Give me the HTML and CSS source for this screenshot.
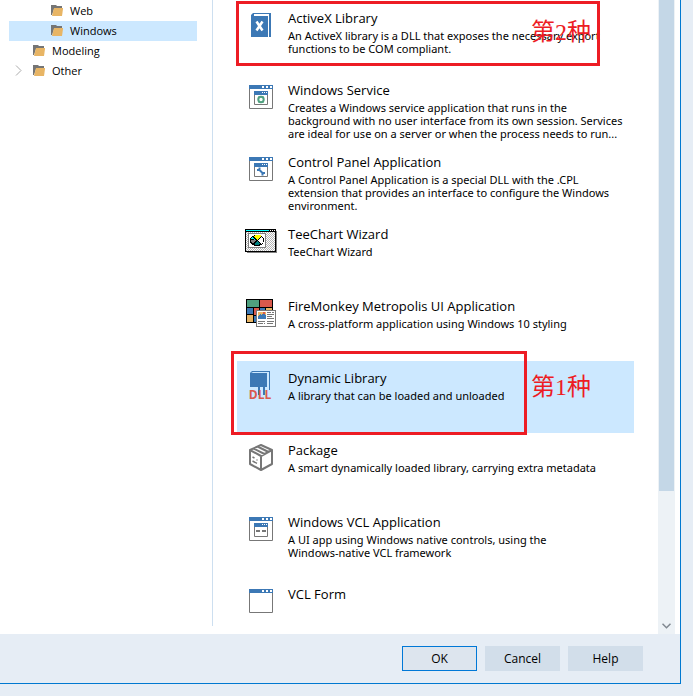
FILE: index.html
```html
<!DOCTYPE html>
<html lang="en">
<head>
  <meta charset="UTF-8">
  <meta name="viewport" content="width=device-width, initial-scale=1.0">
  <title>New Items</title>
  <link rel="stylesheet" href="styles.css">
</head>
<body>
  <!-- shared icon parts -->
  <svg class="defs" width="0" height="0">
    <defs>
      <g id="folder">
        <path fill="#757575" d="M0 0h5l1 1h5v3H3L1 10H0z"/>
        <path fill="#e8b565" d="M3 3h9v1l-1 7H1z"/>
      </g>
      <g id="window">
        <path fill="#fff" stroke="#777" d="M4.500 4.500h23v23h-23z"/>
        <path fill="#3c78b5" d="M4 4h24v4H4z"/>
        <path fill="#fff" d="M17 5h2v2h-2zM21 5h2v2h-2zM25 5h2v2h-2z"/>
      </g>
      <g id="inner">
        <path fill="#fff" stroke="#777" d="M9.500 10.500h13v13h-13z"/>
        <path fill="#3c78b5" d="M9 10h14v4H9z"/>
        <path fill="#fff" d="M17 11h1v1h-1zM19 11h1v1h-1zM21 11h1v1h-1z"/>
      </g>
      <pattern id="dots" width="2" height="2" patternUnits="userSpaceOnUse">
        <path fill="#fff" d="M0 0h2v2H0z"/>
        <path fill="#b4b4b4" d="M0 0h1v1H0zM1 1h1v1H1z"/>
      </pattern>
    </defs>
  </svg>

  <div class="dialog">
    <main class="content">
      <nav class="tree">
        <ul>
          <li class="node level-2"><svg class="folder" viewBox="0 0 12 11"><use href="#folder"/></svg>Web</li>
          <li class="node level-2 selected"><svg class="folder" viewBox="0 0 12 11"><use href="#folder"/></svg>Windows</li>
          <li class="node"><svg class="folder" viewBox="0 0 12 11"><use href="#folder"/></svg>Modeling</li>
          <li class="node">
            <svg class="expand" viewBox="0 0 7 11"><path fill="none" stroke="#aaa" d="M1 .5l5 5-5 5"/></svg>
            <svg class="folder" viewBox="0 0 12 11"><use href="#folder"/></svg>Other
          </li>
        </ul>
      </nav>

      <ul class="gallery">
        <li class="item">
          <svg class="icon" viewBox="0 0 32 32">
            <path fill="#3c78b5" d="M8 4h18v24h-2V6H9v1h14v21H6V6z"/>
            <path fill="#fff" d="M9 5h15v1H9z"/>
            <path fill="none" stroke="#fff" stroke-width="2.500" d="M11.500 12.500l6 9M17.500 12.500l-6 9"/>
          </svg>
          <div class="info">
            <h2>ActiveX Library</h2>
            <p>An ActiveX library is a DLL that exposes the necessary export functions to be COM compliant.</p>
          </div>
          <div class="mark mark-second"></div>
          <span class="note note-second" lang="zh-CN">第2种</span>
        </li>
        <li class="item">
          <svg class="icon" viewBox="0 0 32 32">
            <use href="#window"/><use href="#inner"/>
            <circle cx="16" cy="18.500" r="2.700" fill="none" stroke="#4fa07f" stroke-width="2"/>
            <path fill="#4fa07f" d="M13 15.500h1.500V17H13zM17.500 15.500H19V17h-1.500zM13 20h1.500v1.500H13zM17.500 20H19v1.500h-1.500z"/>
          </svg>
          <div class="info">
            <h2>Windows Service</h2>
            <p>Creates a Windows service application that runs in the background with no user interface from its own session. Services are ideal for use on a server or when the process needs to run...</p>
          </div>
        </li>
        <li class="item">
          <svg class="icon" viewBox="0 0 32 32">
            <use href="#window"/><use href="#inner"/>
            <path fill="none" stroke="#3c78b5" stroke-width="2" d="M14 16.500l4.500 4.500M12 17h2.500v-2.500M17.500 22.500V20H20"/>
          </svg>
          <div class="info">
            <h2>Control Panel Application</h2>
            <p>A Control Panel Application is a special DLL with the .CPL extension that provides an interface to configure the Windows environment.</p>
          </div>
        </li>
        <li class="item">
          <svg class="icon" viewBox="0 0 32 32" shape-rendering="crispEdges">
            <path fill="#808080" d="M2 6h30v22H2z"/>
            <path d="M0 4h31v23H0z"/>
            <path fill="#0ff" d="M1 5h23v1H1z"/>
            <path fill="#fff" d="M25 5h1v1h-1zM27 5h1v1h-1zM29 5h1v1h-1z"/>
            <path fill="url(#dots)" d="M1 7h29v19H1z"/>
            <path fill="#fff" stroke="#808080" d="M3.500 8.500h17v14h-17z"/>
            <ellipse cx="12" cy="15.500" rx="7" ry="5.500"/>
            <path fill="#ff0" d="M12 15l-4-4 3-1h3l3 1z"/>
            <path fill="#0ff" d="M11 15l-5-1 1-2z"/>
            <path fill="#808080" d="M6 15h5l-3 4-2-2z"/>
            <path fill="#008080" d="M12 16l3 3-2 1h-3l-1-1z"/>
            <path fill="#fff" d="M13 15l3-3 2 2v3l-2 2z"/>
          </svg>
          <div class="info">
            <h2>TeeChart Wizard</h2>
            <p>TeeChart Wizard</p>
          </div>
        </li>
        <li class="item">
          <svg class="icon" viewBox="0 0 32 32" shape-rendering="crispEdges">
            <path d="M1 2h27v24H1z"/>
            <path fill="#4fa07f" d="M2 3h12v7H2z"/>
            <path fill="#d9594c" d="M15 3h12v7H15zM9 11h5v7H9z"/>
            <path fill="#3c78b5" d="M2 11h6v6H2zM9 19h5v6H9zM15 11h5v7h-5z"/>
            <path fill="#e8b565" d="M2 18h6v7H2zM21 11h6v7h-6z"/>
            <path fill="#fff" stroke="#777" d="M11.500 13.500h19v16h-19z"/>
            <path fill="#e8b565" d="M13 15h8v7h-8z"/>
            <path fill="#3c78b5" d="M13 22v-3l2-2 2 1 1-2 3 3v3z"/>
            <path fill="#d9594c" d="M18 15h2v2h-2z"/>
            <path fill="#777" d="M22 15h4v1h-4zM27 15h2v1h-2zM22 17h7v1h-7zM22 19h5v1h-5zM22 21h7v1h-7zM13 24h7v1h-7zM13 26h5v1h-5zM19 26h1v1h-1zM22 24h7v1h-7zM22 26h6v1h-6z"/>
          </svg>
          <div class="info">
            <h2>FireMonkey Metropolis UI Application</h2>
            <p>A cross-platform application using Windows 10 styling</p>
          </div>
        </li>
        <li class="item selected">
          <svg class="icon" viewBox="0 0 32 32">
            <path fill="#3c78b5" d="M7 2h18v19h-1V3H8L6 4h16v14H5V4z"/>
            <path fill="#3c78b5" d="M13 18h2v8h-2zM18 18h2v8h-2z"/>
            <text class="dll-mark" x="15" y="30" text-anchor="middle">DLL</text>
          </svg>
          <div class="info">
            <h2>Dynamic Library</h2>
            <p>A library that can be loaded and unloaded</p>
          </div>
          <div class="mark mark-first"></div>
          <span class="note note-first" lang="zh-CN">第1种</span>
        </li>
        <li class="item">
          <svg class="icon" viewBox="0 0 32 32">
            <path fill="none" stroke="#777" stroke-width="2" stroke-linejoin="round" d="M16 4l11 5v14l-11 6-11-6V9zM5 9l11 6 11-6M16 15v14M8.500 7.500l11 5.500M12.500 5.500l11 5.500"/>
            <path fill="none" stroke="#777" stroke-width="1.500" d="M7.500 16l2 1M7.500 20l4.500 2.300M12 18.500v1"/>
          </svg>
          <div class="info">
            <h2>Package</h2>
            <p>A smart dynamically loaded library, carrying extra metadata</p>
          </div>
        </li>
        <li class="item">
          <svg class="icon" viewBox="0 0 32 32">
            <use href="#window"/><use href="#inner"/>
            <path fill="#777" d="M11 17h4v2h-4zM17 17h4v2h-4z"/>
          </svg>
          <div class="info">
            <h2>Windows VCL Application</h2>
            <p>A UI app using Windows native controls, using the <span class="keep">Windows-native</span> VCL framework</p>
          </div>
        </li>
        <li class="item">
          <svg class="icon" viewBox="0 0 32 32"><use href="#window"/></svg>
          <div class="info">
            <h2>VCL Form</h2>
          </div>
        </li>
      </ul>

      <div class="scrollbar">
        <div class="thumb"></div>
        <button type="button" class="scroll-down" aria-label="Scroll down">
          <svg viewBox="0 0 9 6"><path fill="none" stroke="#808890" stroke-width="1.500" d="M.5.700l4 4 4-4"/></svg>
        </button>
      </div>
    </main>

    <footer class="actions">
      <button type="button" class="btn default">OK</button>
      <button type="button" class="btn">Cancel</button>
      <button type="button" class="btn">Help</button>
    </footer>
  </div>
</body>
</html>
```
FILE: styles.css
```css
* {
  box-sizing: border-box;
}
body {
  margin: 0;
  background-color: #e6edf5;
  font-family: "Noto Sans", "Open Sans", sans-serif;
  font-size: 11px;
  color: #000;
}
ul {
  list-style: none;
  margin: 0;
  padding: 0;
}
.defs {
  position: absolute;
}
.dialog {
  display: flex;
  flex-direction: column;
  height: calc(100vh - 12px);
  margin-right: 12px;
  border: solid #0078d0;
  border-width: 0 1px 1px 0;
}
.content {
  display: flex;
  flex: 1;
  min-height: 0;
  padding-right: 5px;
  background-color: #fff;
  overflow: hidden;
}

/* category tree */
.tree {
  flex: 0 0 213px;
  margin-bottom: 8px;
  padding: 1px 15px 0 9px;
  border-right: 1px solid #cddff0;
  font-family: "Open Sans", sans-serif;
}
.node {
  display: flex;
  align-items: center;
  height: 20px;
  padding: 0 0 1px 24px;
  position: relative;
}
.level-2 {
  padding-left: 42px;
}
.selected {
  background-color: #cce8ff;
}
.folder {
  width: 12px;
  height: 11px;
  margin-right: 7px;
}
.expand {
  position: absolute;
  left: 6px;
  width: 7px;
  height: 11px;
}

/* item list */
.gallery {
  flex: 1;
  padding: 1px 24px 0;
}
.item {
  position: relative;
  display: flex;
  gap: 11px;
  height: 72px;
  padding: 8px;
}
.icon {
  flex: none;
  width: 32px;
  height: 32px;
}
.info {
  flex: 1;
}
.info h2 {
  margin: 0 0 2px;
  font-family: "Open Sans", sans-serif;
  font-size: 13px;
  font-weight: normal;
  line-height: 18px;
}
.info p {
  margin: 0;
  line-height: 13px;
}
.keep {
  white-space: nowrap;
}
.dll-mark {
  font: bold 12px "Open Sans", sans-serif;
  fill: #d9594c;
}

/* red marks drawn over the list */
.mark {
  position: absolute;
  border: 3px solid #ed1c24;
}
.mark-second {
  inset: 0 34px 7px -1px;
}
.mark-first {
  inset: -10px 107px -2px -6px;
}
.note {
  position: absolute;
  left: 294px;
  font-family: "Liberation Serif", "Noto Sans CJK SC", serif;
  font-size: 24px;
  line-height: 32px;
  color: #ed1c24;
}
.note-second {
  top: 15px;
}
.note-first {
  top: 10px;
}

.scrollbar {
  display: flex;
  flex-direction: column;
  justify-content: space-between;
  width: 17px;
  padding: 0 1px;
  background-color: #edf2f6;
}
.thumb {
  height: 77.500%;
  background-color: #c4d7e7;
}
.scroll-down {
  display: flex;
  align-items: center;
  justify-content: center;
  height: 17px;
  padding: 0;
  border: none;
  background: none;
}
.scroll-down svg {
  width: 9px;
  height: 6px;
}

/* footer buttons */
.actions {
  display: flex;
  justify-content: flex-end;
  gap: 8px;
  padding: 12px 37px;
}
.btn {
  width: 75px;
  height: 25px;
  padding: 0;
  border: 1px solid #d2deea;
  background-color: #d2deea;
  font-family: "Open Sans", sans-serif;
  font-size: 12px;
  color: #000;
}
.btn.default {
  border-color: #0078d7;
  background-color: #dde5ee;
}
```
